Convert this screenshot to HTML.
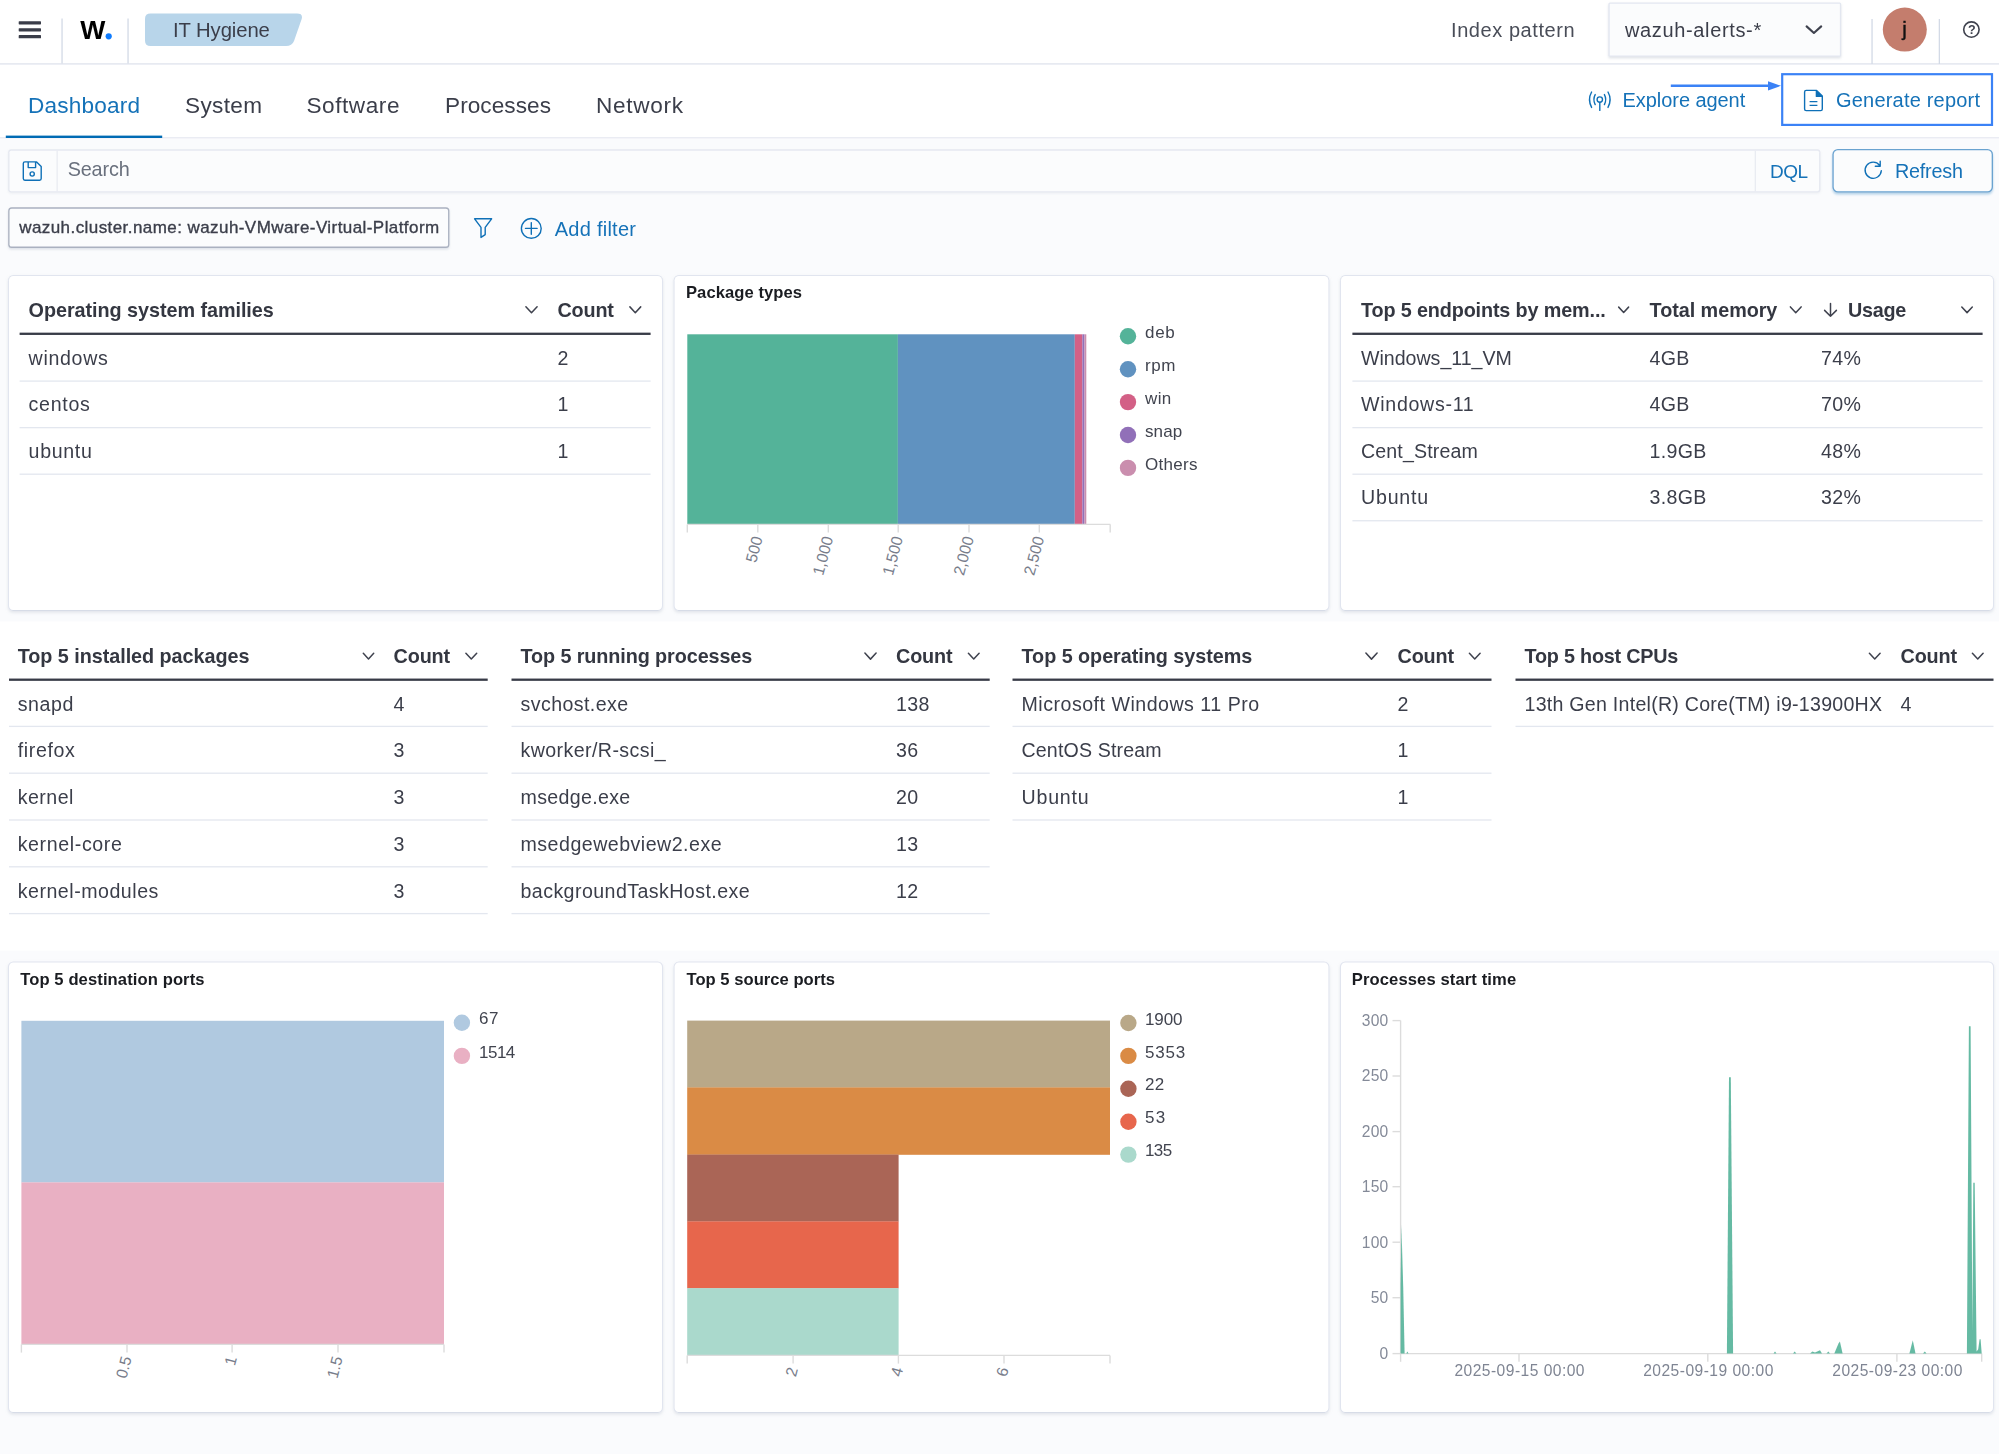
<!DOCTYPE html>
<html lang="en"><head><meta charset="utf-8"><title>IT Hygiene - Dashboard</title>
<style>
html,body{margin:0;padding:0;}
body{width:1999px;height:1454px;position:relative;overflow:hidden;background:#fafbfd;font-family:"Liberation Sans",Arial,sans-serif;color:#3b3e4a;}
div{position:absolute;}
#txt{left:0;top:0;width:1999px;height:1454px;will-change:transform;}
.t{position:absolute;white-space:nowrap;line-height:1;}
svg{position:absolute;left:0;top:0;}
svg text{font-family:"Liberation Sans",Arial,sans-serif;}
</style></head>
<body>

<svg width="1999" height="1454" viewBox="0 0 1999 1454">
<defs>
<filter id="sh0" x="-5%" y="-30%" width="110%" height="170%"><feDropShadow dx="0" dy="1" stdDeviation="1" flood-color="#98a2b3" flood-opacity="0.15"/></filter>
<filter id="sh1" x="-5%" y="-30%" width="110%" height="170%"><feDropShadow dx="0" dy="1.5" stdDeviation="1.2" flood-color="#98a2b3" flood-opacity="0.3"/></filter>
<filter id="shb" x="-5%" y="-30%" width="110%" height="170%"><feDropShadow dx="0" dy="2" stdDeviation="1.3" flood-color="#006bb4" flood-opacity="0.28"/></filter>
<filter id="shp" x="-3%" y="-5%" width="106%" height="112%"><feDropShadow dx="0" dy="1.6" stdDeviation="1.4" flood-color="#98a2b3" flood-opacity="0.26"/></filter>
</defs>
<rect x="0.00" y="0.00" width="1999.00" height="64.00" rx="0" fill="#fff"/>
<rect x="0.00" y="63.30" width="1999.00" height="1.40" rx="0" fill="#dde2ec"/>
<rect x="18.70" y="21.20" width="22.30" height="3.20" fill="#3a3d49" rx="0.6"/>
<rect x="18.70" y="28.20" width="22.30" height="3.20" fill="#3a3d49" rx="0.6"/>
<rect x="18.70" y="35.10" width="22.30" height="3.20" fill="#3a3d49" rx="0.6"/>
<rect x="61.40" y="18.50" width="1.30" height="45.00" fill="#d3dae6" />
<rect x="127.40" y="18.50" width="1.30" height="45.00" fill="#d3dae6" />
<circle cx="108.70" cy="36.30" r="3.10" fill="#0f7cff" />
<path d="M150.5 13.6 H297 Q303.5 13.6 301.5 19.5 L294 41 Q292 46 286 46 H150.5 Q145 46 145 40.5 V19 Q145 13.6 150.5 13.6 Z" stroke="none" fill="#b8d5ea" stroke-width="1.33" />
<rect x="1608.40" y="2.40" width="232.80" height="54.40" rx="1.5" fill="#e3e7f0" filter="url(#sh1)"/>
<rect x="1609.73" y="3.73" width="230.14" height="51.74" rx="0.17" fill="#fbfcfd"/>
<path d="M1806.6 26.4 L1813.9 33 L1821.2 26.4" stroke="#3f424e" fill="none" stroke-width="2.1" stroke-linecap="round" stroke-linejoin="round"/>
<rect x="1871.40" y="19.00" width="1.30" height="45.00" fill="#d3dae6" />
<rect x="1938.70" y="19.00" width="1.30" height="45.00" fill="#d3dae6" />
<circle cx="1904.80" cy="29.60" r="22.00" fill="#c47d6d" />
<circle cx="1971.4" cy="29.6" r="7.7" fill="none" stroke="#3f424e" stroke-width="1.6"/>
<rect x="0.00" y="64.70" width="1999.00" height="72.30" rx="0" fill="#fff"/>
<rect x="0.00" y="137.00" width="1999.00" height="1.40" rx="0" fill="#eaecf3"/>
<rect x="5.80" y="135.60" width="156.40" height="2.40" fill="#006bb4" />
<rect x="1781.10" y="73.10" width="212.00" height="52.90" rx="0" fill="#3b82f6"/>
<rect x="1783.30" y="75.30" width="207.60" height="48.50" rx="0.00" fill="#fff"/>
<line x1="1670.80" y1="85.80" x2="1770.00" y2="85.80" stroke="#3b82f6" stroke-width="2.4" />
<path d="M1768 81.3 L1781 85.8 L1768 90.4 Z" stroke="none" fill="#3b82f6" stroke-width="1.33" />
<rect x="8.20" y="149.30" width="1812.20" height="43.20" rx="3" fill="#e6e9f1" filter="url(#sh0)"/>
<rect x="9.53" y="150.63" width="1809.54" height="40.54" rx="1.67" fill="#fbfcfd"/>
<rect x="56.50" y="150.50" width="1.30" height="41.00" fill="#e9ecf2" />
<rect x="1754.70" y="150.50" width="1.30" height="41.00" fill="#e9ecf2" />
<rect x="1832.40" y="149.00" width="160.60" height="43.50" rx="5.5" fill="#6aa3d0" filter="url(#shb)"/>
<rect x="1833.73" y="150.33" width="157.94" height="40.84" rx="4.17" fill="#fbfcfd"/>
<rect x="8.20" y="207.30" width="441.20" height="40.60" rx="3.5" fill="#aab1c0" filter="url(#sh1)"/>
<rect x="9.53" y="208.63" width="438.54" height="37.94" rx="2.17" fill="#fbfcfd"/>
<rect x="8.00" y="275.00" width="655.00" height="336.00" rx="5.3" fill="#e1e5ef" filter="url(#shp)"/>
<rect x="9.00" y="276.00" width="653.00" height="334.00" rx="4.30" fill="#fff"/>
<rect x="12.50" y="610.00" width="646.00" height="1.00" fill="#d7dce7" />
<rect x="8.00" y="961.50" width="655.00" height="451.50" rx="5.3" fill="#e1e5ef" filter="url(#shp)"/>
<rect x="9.00" y="962.50" width="653.00" height="449.50" rx="4.30" fill="#fff"/>
<rect x="12.50" y="1412.00" width="646.00" height="1.00" fill="#d7dce7" />
<rect x="673.60" y="275.00" width="655.80" height="336.00" rx="5.3" fill="#e1e5ef" filter="url(#shp)"/>
<rect x="674.60" y="276.00" width="653.80" height="334.00" rx="4.30" fill="#fff"/>
<rect x="678.10" y="610.00" width="646.80" height="1.00" fill="#d7dce7" />
<rect x="673.60" y="961.50" width="655.80" height="451.50" rx="5.3" fill="#e1e5ef" filter="url(#shp)"/>
<rect x="674.60" y="962.50" width="653.80" height="449.50" rx="4.30" fill="#fff"/>
<rect x="678.10" y="1412.00" width="646.80" height="1.00" fill="#d7dce7" />
<rect x="1340.00" y="275.00" width="654.00" height="336.00" rx="5.3" fill="#e1e5ef" filter="url(#shp)"/>
<rect x="1341.00" y="276.00" width="652.00" height="334.00" rx="4.30" fill="#fff"/>
<rect x="1344.50" y="610.00" width="645.00" height="1.00" fill="#d7dce7" />
<rect x="1340.00" y="961.50" width="654.00" height="451.50" rx="5.3" fill="#e1e5ef" filter="url(#shp)"/>
<rect x="1341.00" y="962.50" width="652.00" height="449.50" rx="4.30" fill="#fff"/>
<rect x="1344.50" y="1412.00" width="645.00" height="1.00" fill="#d7dce7" />
<rect x="0.00" y="621.50" width="1999.00" height="329.10" rx="0" fill="#fff"/>
<rect x="19.60" y="332.65" width="631.00" height="2.30" fill="#383b47" />
<path d="M525.90 306.78 L531.50 312.82 L537.10 306.78" stroke="#3f424e" fill="none" stroke-width="1.5" stroke-linecap="round" stroke-linejoin="round"/>
<path d="M629.90 306.88 L635.30 312.72 L640.70 306.88" stroke="#3f424e" fill="none" stroke-width="1.5" stroke-linecap="round" stroke-linejoin="round"/>
<rect x="19.60" y="380.45" width="631.00" height="1.30" fill="#e3e7ef" />
<rect x="19.60" y="427.00" width="631.00" height="1.30" fill="#e3e7ef" />
<rect x="19.60" y="473.55" width="631.00" height="1.30" fill="#e3e7ef" />
<rect x="1352.40" y="332.65" width="630.20" height="2.30" fill="#383b47" />
<path d="M1618.70 307.13 L1623.65 312.47 L1628.60 307.13" stroke="#3f424e" fill="none" stroke-width="1.5" stroke-linecap="round" stroke-linejoin="round"/>
<path d="M1790.40 306.91 L1795.75 312.69 L1801.10 306.91" stroke="#3f424e" fill="none" stroke-width="1.5" stroke-linecap="round" stroke-linejoin="round"/>
<path d="M1961.80 306.97 L1967.05 312.63 L1972.30 306.97" stroke="#3f424e" fill="none" stroke-width="1.5" stroke-linecap="round" stroke-linejoin="round"/>
<rect x="1352.40" y="380.45" width="630.20" height="1.30" fill="#e3e7ef" />
<rect x="1352.40" y="427.00" width="630.20" height="1.30" fill="#e3e7ef" />
<rect x="1352.40" y="473.55" width="630.20" height="1.30" fill="#e3e7ef" />
<rect x="1352.40" y="520.10" width="630.20" height="1.30" fill="#e3e7ef" />
<path d="M1830.5 303.4 V316.2 M1824.6 310.4 L1830.5 316.3 L1836.4 310.4" stroke="#3f424e" fill="none" stroke-width="1.5" stroke-linecap="round" stroke-linejoin="round"/>
<rect x="9.00" y="678.55" width="478.70" height="2.30" fill="#383b47" />
<path d="M363.30 653.29 L368.50 658.91 L373.70 653.29" stroke="#3f424e" fill="none" stroke-width="1.5" stroke-linecap="round" stroke-linejoin="round"/>
<path d="M465.90 653.18 L471.30 659.02 L476.70 653.18" stroke="#3f424e" fill="none" stroke-width="1.5" stroke-linecap="round" stroke-linejoin="round"/>
<rect x="9.00" y="725.75" width="478.70" height="1.30" fill="#e3e7ef" />
<rect x="9.00" y="772.55" width="478.70" height="1.30" fill="#e3e7ef" />
<rect x="9.00" y="819.35" width="478.70" height="1.30" fill="#e3e7ef" />
<rect x="9.00" y="866.15" width="478.70" height="1.30" fill="#e3e7ef" />
<rect x="9.00" y="912.95" width="478.70" height="1.30" fill="#e3e7ef" />
<rect x="511.50" y="678.55" width="478.20" height="2.30" fill="#383b47" />
<path d="M864.90 653.08 L870.50 659.12 L876.10 653.08" stroke="#3f424e" fill="none" stroke-width="1.5" stroke-linecap="round" stroke-linejoin="round"/>
<path d="M968.40 653.21 L973.75 658.99 L979.10 653.21" stroke="#3f424e" fill="none" stroke-width="1.5" stroke-linecap="round" stroke-linejoin="round"/>
<rect x="511.50" y="725.75" width="478.20" height="1.30" fill="#e3e7ef" />
<rect x="511.50" y="772.55" width="478.20" height="1.30" fill="#e3e7ef" />
<rect x="511.50" y="819.35" width="478.20" height="1.30" fill="#e3e7ef" />
<rect x="511.50" y="866.15" width="478.20" height="1.30" fill="#e3e7ef" />
<rect x="511.50" y="912.95" width="478.20" height="1.30" fill="#e3e7ef" />
<rect x="1012.50" y="678.55" width="479.00" height="2.30" fill="#383b47" />
<path d="M1365.90 653.08 L1371.50 659.12 L1377.10 653.08" stroke="#3f424e" fill="none" stroke-width="1.5" stroke-linecap="round" stroke-linejoin="round"/>
<path d="M1469.40 653.21 L1474.75 658.99 L1480.10 653.21" stroke="#3f424e" fill="none" stroke-width="1.5" stroke-linecap="round" stroke-linejoin="round"/>
<rect x="1012.50" y="725.75" width="479.00" height="1.30" fill="#e3e7ef" />
<rect x="1012.50" y="772.55" width="479.00" height="1.30" fill="#e3e7ef" />
<rect x="1012.50" y="819.35" width="479.00" height="1.30" fill="#e3e7ef" />
<rect x="1515.50" y="678.55" width="478.00" height="2.30" fill="#383b47" />
<path d="M1869.40 653.21 L1874.75 658.99 L1880.10 653.21" stroke="#3f424e" fill="none" stroke-width="1.5" stroke-linecap="round" stroke-linejoin="round"/>
<path d="M1972.40 653.21 L1977.75 658.99 L1983.10 653.21" stroke="#3f424e" fill="none" stroke-width="1.5" stroke-linecap="round" stroke-linejoin="round"/>
<rect x="1515.50" y="725.75" width="478.00" height="1.30" fill="#e3e7ef" />
<rect x="687.30" y="334.30" width="210.60" height="189.80" fill="#54b399" />
<rect x="897.90" y="334.30" width="176.90" height="189.80" fill="#6092c0" />
<rect x="1074.80" y="334.30" width="7.60" height="189.80" fill="#d36086" />
<rect x="1082.40" y="334.30" width="2.10" height="189.80" fill="#9170b8" />
<rect x="1084.50" y="334.30" width="1.80" height="189.80" fill="#ca8eae" />
<line x1="687.30" y1="524.40" x2="1110.40" y2="524.40" stroke="#dcdcdc" stroke-width="1.4" />
<line x1="687.30" y1="524.40" x2="687.30" y2="532.60" stroke="#dcdcdc" stroke-width="1.4" />
<line x1="757.80" y1="524.40" x2="757.80" y2="532.60" stroke="#dcdcdc" stroke-width="1.4" />
<line x1="828.30" y1="524.40" x2="828.30" y2="532.60" stroke="#dcdcdc" stroke-width="1.4" />
<line x1="898.20" y1="524.40" x2="898.20" y2="532.60" stroke="#dcdcdc" stroke-width="1.4" />
<line x1="969.00" y1="524.40" x2="969.00" y2="532.60" stroke="#dcdcdc" stroke-width="1.4" />
<line x1="1039.30" y1="524.40" x2="1039.30" y2="532.60" stroke="#dcdcdc" stroke-width="1.4" />
<line x1="1110.20" y1="524.40" x2="1110.20" y2="532.60" stroke="#dcdcdc" stroke-width="1.4" />
<text transform="translate(762.70,538.00) rotate(-75)" text-anchor="end" font-size="15.8" fill="#787d8b">500</text>
<text transform="translate(833.20,538.00) rotate(-75)" text-anchor="end" font-size="15.8" fill="#787d8b">1,000</text>
<text transform="translate(903.10,538.00) rotate(-75)" text-anchor="end" font-size="15.8" fill="#787d8b">1,500</text>
<text transform="translate(973.90,538.00) rotate(-75)" text-anchor="end" font-size="15.8" fill="#787d8b">2,000</text>
<text transform="translate(1044.20,538.00) rotate(-75)" text-anchor="end" font-size="15.8" fill="#787d8b">2,500</text>
<circle cx="1128.00" cy="336.30" r="8.20" fill="#54b399" />
<circle cx="1128.00" cy="369.20" r="8.20" fill="#6092c0" />
<circle cx="1128.00" cy="402.10" r="8.20" fill="#d36086" />
<circle cx="1128.00" cy="435.00" r="8.20" fill="#9170b8" />
<circle cx="1128.00" cy="467.90" r="8.20" fill="#ca8eae" />
<rect x="21.40" y="1020.80" width="422.60" height="161.70" fill="#b0c9e0" />
<rect x="21.40" y="1182.40" width="422.60" height="162.00" fill="#e9b0c3" />
<line x1="21.40" y1="1344.40" x2="444.00" y2="1344.40" stroke="#dcdcdc" stroke-width="1.4" />
<line x1="21.40" y1="1344.40" x2="21.40" y2="1352.60" stroke="#dcdcdc" stroke-width="1.4" />
<line x1="127.00" y1="1344.40" x2="127.00" y2="1352.60" stroke="#dcdcdc" stroke-width="1.4" />
<line x1="232.10" y1="1344.40" x2="232.10" y2="1352.60" stroke="#dcdcdc" stroke-width="1.4" />
<line x1="338.00" y1="1344.40" x2="338.00" y2="1352.60" stroke="#dcdcdc" stroke-width="1.4" />
<line x1="444.00" y1="1344.40" x2="444.00" y2="1352.60" stroke="#dcdcdc" stroke-width="1.4" />
<text transform="translate(131.90,1358.00) rotate(-75)" text-anchor="end" font-size="15.8" fill="#787d8b">0.5</text>
<text transform="translate(237.00,1358.00) rotate(-75)" text-anchor="end" font-size="15.8" fill="#787d8b">1</text>
<text transform="translate(342.90,1358.00) rotate(-75)" text-anchor="end" font-size="15.8" fill="#787d8b">1.5</text>
<circle cx="461.90" cy="1022.70" r="8.20" fill="#b0c9e0" />
<circle cx="461.90" cy="1055.90" r="8.20" fill="#e9b0c3" />
<rect x="687.20" y="1020.60" width="422.80" height="67.00" fill="#b9a888" />
<rect x="687.20" y="1087.40" width="422.80" height="67.40" fill="#da8b45" />
<rect x="687.20" y="1154.60" width="211.40" height="67.00" fill="#aa6556" />
<rect x="687.20" y="1221.40" width="211.40" height="67.00" fill="#e7664c" />
<rect x="687.20" y="1288.20" width="211.40" height="67.30" fill="#aad9cc" />
<line x1="687.20" y1="1355.40" x2="1110.00" y2="1355.40" stroke="#dcdcdc" stroke-width="1.4" />
<line x1="687.20" y1="1355.40" x2="687.20" y2="1363.60" stroke="#dcdcdc" stroke-width="1.4" />
<line x1="793.10" y1="1355.40" x2="793.10" y2="1363.60" stroke="#dcdcdc" stroke-width="1.4" />
<line x1="898.40" y1="1355.40" x2="898.40" y2="1363.60" stroke="#dcdcdc" stroke-width="1.4" />
<line x1="1004.00" y1="1355.40" x2="1004.00" y2="1363.60" stroke="#dcdcdc" stroke-width="1.4" />
<line x1="1110.00" y1="1355.40" x2="1110.00" y2="1363.60" stroke="#dcdcdc" stroke-width="1.4" />
<text transform="translate(798.00,1369.00) rotate(-75)" text-anchor="end" font-size="15.8" fill="#787d8b">2</text>
<text transform="translate(903.30,1369.00) rotate(-75)" text-anchor="end" font-size="15.8" fill="#787d8b">4</text>
<text transform="translate(1008.90,1369.00) rotate(-75)" text-anchor="end" font-size="15.8" fill="#787d8b">6</text>
<circle cx="1128.40" cy="1023.00" r="8.20" fill="#b9a888" />
<circle cx="1128.40" cy="1055.90" r="8.20" fill="#da8b45" />
<circle cx="1128.40" cy="1088.80" r="8.20" fill="#aa6556" />
<circle cx="1128.40" cy="1121.70" r="8.20" fill="#e7664c" />
<circle cx="1128.40" cy="1154.60" r="8.20" fill="#aad9cc" />
<line x1="1400.60" y1="1020.60" x2="1400.60" y2="1353.60" stroke="#dcdcdc" stroke-width="1.4" />
<line x1="1400.60" y1="1353.60" x2="1981.70" y2="1353.60" stroke="#dcdcdc" stroke-width="1.4" />
<line x1="1392.50" y1="1020.60" x2="1400.60" y2="1020.60" stroke="#dcdcdc" stroke-width="1.4" />
<line x1="1392.50" y1="1076.00" x2="1400.60" y2="1076.00" stroke="#dcdcdc" stroke-width="1.4" />
<line x1="1392.50" y1="1131.60" x2="1400.60" y2="1131.60" stroke="#dcdcdc" stroke-width="1.4" />
<line x1="1392.50" y1="1186.70" x2="1400.60" y2="1186.70" stroke="#dcdcdc" stroke-width="1.4" />
<line x1="1392.50" y1="1242.20" x2="1400.60" y2="1242.20" stroke="#dcdcdc" stroke-width="1.4" />
<line x1="1392.50" y1="1297.70" x2="1400.60" y2="1297.70" stroke="#dcdcdc" stroke-width="1.4" />
<line x1="1392.50" y1="1353.60" x2="1400.60" y2="1353.60" stroke="#dcdcdc" stroke-width="1.4" />
<line x1="1400.60" y1="1353.60" x2="1400.60" y2="1361.80" stroke="#dcdcdc" stroke-width="1.4" />
<line x1="1519.00" y1="1353.60" x2="1519.00" y2="1361.80" stroke="#dcdcdc" stroke-width="1.4" />
<line x1="1707.80" y1="1353.60" x2="1707.80" y2="1361.80" stroke="#dcdcdc" stroke-width="1.4" />
<line x1="1896.90" y1="1353.60" x2="1896.90" y2="1361.80" stroke="#dcdcdc" stroke-width="1.4" />
<line x1="1981.70" y1="1353.60" x2="1981.70" y2="1361.80" stroke="#dcdcdc" stroke-width="1.4" />
<path d="M1400.6 1353.6 L1400.6 1287.0 L1401.4 1224.8 L1403.2 1287.0 L1404.6 1353.6 Z" stroke="none" fill="#54b399" stroke-width="1.33" fill-opacity="0.9"/>
<path d="M1406.3 1353.6 L1407.3 1351.4 L1408.5 1353.6 Z" stroke="none" fill="#54b399" stroke-width="1.33" fill-opacity="0.9"/>
<path d="M1726.9 1353.6 L1729.0 1077.2 L1730.8 1077.2 L1733.1 1353.6 Z" stroke="none" fill="#54b399" stroke-width="1.33" fill-opacity="0.9"/>
<path d="M1773.5 1353.6 L1775.0 1351.4 L1776.5 1353.6 Z" stroke="none" fill="#54b399" stroke-width="1.33" fill-opacity="0.9"/>
<path d="M1793.0 1353.6 L1794.7 1351.4 L1796.3 1353.6 Z" stroke="none" fill="#54b399" stroke-width="1.33" fill-opacity="0.9"/>
<path d="M1810.0 1353.6 L1812.4 1351.4 L1815.0 1352.5 L1820.0 1350.3 L1822.0 1353.6 Z" stroke="none" fill="#54b399" stroke-width="1.33" fill-opacity="0.9"/>
<path d="M1826.5 1353.6 L1828.3 1351.4 L1830.0 1353.6 Z" stroke="none" fill="#54b399" stroke-width="1.33" fill-opacity="0.9"/>
<path d="M1834.3 1353.6 L1838.5 1343.6 L1839.9 1341.4 L1842.6 1353.6 Z" stroke="none" fill="#54b399" stroke-width="1.33" fill-opacity="0.9"/>
<path d="M1909.4 1353.6 L1912.8 1340.3 L1915.5 1353.6 Z" stroke="none" fill="#54b399" stroke-width="1.33" fill-opacity="0.9"/>
<path d="M1923.0 1353.6 L1924.8 1351.4 L1926.5 1353.6 Z" stroke="none" fill="#54b399" stroke-width="1.33" fill-opacity="0.9"/>
<path d="M1966.9 1353.6 L1968.9 1026.2 L1970.6 1026.2 L1972.4 1331.4 L1973.3 1182.7 L1974.7 1182.7 L1976.6 1351.4 L1978.2 1349.2 L1979.6 1339.2 L1980.6 1339.2 L1981.7 1353.6 Z" stroke="none" fill="#54b399" stroke-width="1.33" fill-opacity="0.9"/>
<path d="M23.3 163.5 Q23.3 161.9 24.9 161.9 H36.6 L41.2 166.5 V178.6 Q41.2 180.2 39.6 180.2 H24.9 Q23.3 180.2 23.3 178.6 Z M28.2 162 V167.6 H35.6 V162" stroke="#0f70b7" fill="none" stroke-width="1.4" stroke-linejoin="round"/>
<circle cx="32.2" cy="174" r="2.1" fill="none" stroke="#0f70b7" stroke-width="1.4"/>
<path d="M474.6 218.8 H491.6 L485.2 227.4 V234.6 L481 237.4 V227.4 Z" stroke="#0f70b7" fill="none" stroke-width="1.4" stroke-linejoin="round"/>
<circle cx="531.3" cy="228.4" r="9.9" fill="none" stroke="#0f70b7" stroke-width="1.4"/>
<path d="M531.3 222.6 V234.2 M525.5 228.4 H537.1" stroke="#0f70b7" fill="none" stroke-width="1.4" stroke-linecap="round"/>
<path d="M1879.6 165.2 A8.1 8.1 0 1 0 1881.3 170.8 M1880.2 161.3 V166.3 H1875.3" stroke="#0f70b7" fill="none" stroke-width="1.4" stroke-linecap="round" stroke-linejoin="round"/>
<circle cx="1599.8" cy="99.6" r="2.7" fill="none" stroke="#0f70b7" stroke-width="1.4"/>
<path d="M1599.8 102.4 V110.4 M1595.2 94.6 Q1592.6 99.4 1595.2 104.6 M1604.4 94.6 Q1607 99.4 1604.4 104.6 M1591.6 92 Q1587.4 99.4 1591.6 107.4 M1608 92 Q1612.2 99.4 1608 107.4" stroke="#0f70b7" fill="none" stroke-width="1.4" stroke-linecap="round"/>
<path d="M1804.6 92 Q1804.6 90.4 1806.2 90.4 H1816.6 L1822.3 96.1 V109 Q1822.3 110.6 1820.7 110.6 H1806.2 Q1804.6 110.6 1804.6 109 Z M1816.4 90.6 V96.4 H1822.2 M1809.6 101.6 H1817.4 M1809.6 105.4 H1817.4" stroke="#0f70b7" fill="none" stroke-width="1.4" stroke-linejoin="round"/>
<path d="M1816.6 90.4 L1822.3 96.1 H1816.6 Z" stroke="none" fill="#0f70b7" stroke-width="1.33" />
</svg>
<div id="txt">
<span class="t" style="left:80.30px;top:17.00px;font-size:26.60px;font-weight:700;color:#000;">W</span>
<span class="t" style="left:173.00px;top:20.00px;font-size:20.30px;letter-spacing:-0.089px;">IT Hygiene</span>
<span class="t" style="left:1451.00px;top:20.00px;font-size:20.00px;letter-spacing:0.571px;color:#494d58;">Index pattern</span>
<span class="t" style="left:1625.00px;top:20.00px;font-size:20.00px;letter-spacing:0.644px;">wazuh-alerts-*</span>
<span class="t" style="left:1902.30px;top:19.00px;font-size:20.50px;color:#111;-webkit-text-stroke:0.4px currentColor;">j</span>
<span class="t" style="left:1967.90px;top:24.00px;font-size:12.50px;font-weight:700;color:#3f424e;">?</span>
<span class="t" style="left:28.00px;top:95.00px;font-size:22.60px;letter-spacing:0.179px;color:#1572b8;">Dashboard</span>
<span class="t" style="left:185.00px;top:95.00px;font-size:22.60px;letter-spacing:0.330px;">System</span>
<span class="t" style="left:306.40px;top:95.00px;font-size:22.60px;letter-spacing:0.559px;">Software</span>
<span class="t" style="left:445.00px;top:95.00px;font-size:22.60px;letter-spacing:0.061px;">Processes</span>
<span class="t" style="left:596.00px;top:95.00px;font-size:22.60px;letter-spacing:0.685px;">Network</span>
<span class="t" style="left:1622.60px;top:90.00px;font-size:20.00px;letter-spacing:-0.068px;color:#1572b8;">Explore agent</span>
<span class="t" style="left:1836.00px;top:90.00px;font-size:20.00px;letter-spacing:0.200px;color:#1572b8;">Generate report</span>
<span class="t" style="left:67.70px;top:160.00px;font-size:19.80px;letter-spacing:-0.147px;color:#69707d;">Search</span>
<span class="t" style="left:1770.00px;top:162.00px;font-size:19.00px;letter-spacing:-0.534px;color:#1572b8;">DQL</span>
<span class="t" style="left:1895.00px;top:162.00px;font-size:19.80px;letter-spacing:-0.222px;color:#1572b8;">Refresh</span>
<span class="t" style="left:19.20px;top:219.00px;font-size:17.00px;letter-spacing:0.430px;-webkit-text-stroke:0.35px currentColor;">wazuh.cluster.name: wazuh-VMware-Virtual-Platform</span>
<span class="t" style="left:554.70px;top:219.00px;font-size:20.00px;letter-spacing:0.263px;color:#1572b8;">Add filter</span>
<span class="t" style="left:28.60px;top:301.00px;font-size:19.80px;letter-spacing:-0.046px;font-weight:700;color:#343741;">Operating system families</span>
<span class="t" style="left:557.40px;top:301.00px;font-size:19.80px;letter-spacing:-0.144px;font-weight:700;color:#343741;">Count</span>
<span class="t" style="left:28.60px;top:349.00px;font-size:19.60px;letter-spacing:0.672px;">windows</span>
<span class="t" style="left:557.40px;top:349.00px;font-size:19.60px;">2</span>
<span class="t" style="left:28.60px;top:395.00px;font-size:19.60px;letter-spacing:0.690px;">centos</span>
<span class="t" style="left:557.40px;top:395.00px;font-size:19.60px;">1</span>
<span class="t" style="left:28.60px;top:442.00px;font-size:19.60px;letter-spacing:0.670px;">ubuntu</span>
<span class="t" style="left:557.40px;top:442.00px;font-size:19.60px;">1</span>
<span class="t" style="left:1361.00px;top:301.00px;font-size:19.80px;letter-spacing:-0.136px;font-weight:700;color:#343741;">Top 5 endpoints by mem...</span>
<span class="t" style="left:1649.60px;top:301.00px;font-size:19.80px;letter-spacing:-0.042px;font-weight:700;color:#343741;">Total memory</span>
<span class="t" style="left:1848.00px;top:301.00px;font-size:19.80px;letter-spacing:-0.283px;font-weight:700;color:#343741;">Usage</span>
<span class="t" style="left:1361.00px;top:349.00px;font-size:19.60px;letter-spacing:-0.013px;">Windows_11_VM</span>
<span class="t" style="left:1649.60px;top:349.00px;font-size:19.60px;letter-spacing:0.300px;">4GB</span>
<span class="t" style="left:1821.00px;top:349.00px;font-size:19.60px;letter-spacing:0.300px;">74%</span>
<span class="t" style="left:1361.00px;top:395.00px;font-size:19.60px;letter-spacing:0.713px;">Windows-11</span>
<span class="t" style="left:1649.60px;top:395.00px;font-size:19.60px;letter-spacing:0.300px;">4GB</span>
<span class="t" style="left:1821.00px;top:395.00px;font-size:19.60px;letter-spacing:0.300px;">70%</span>
<span class="t" style="left:1361.00px;top:442.00px;font-size:19.60px;letter-spacing:0.132px;">Cent_Stream</span>
<span class="t" style="left:1649.60px;top:442.00px;font-size:19.60px;letter-spacing:0.300px;">1.9GB</span>
<span class="t" style="left:1821.00px;top:442.00px;font-size:19.60px;letter-spacing:0.300px;">48%</span>
<span class="t" style="left:1361.00px;top:488.00px;font-size:19.60px;letter-spacing:0.799px;">Ubuntu</span>
<span class="t" style="left:1649.60px;top:488.00px;font-size:19.60px;letter-spacing:0.300px;">3.8GB</span>
<span class="t" style="left:1821.00px;top:488.00px;font-size:19.60px;letter-spacing:0.300px;">32%</span>
<span class="t" style="left:17.70px;top:647.00px;font-size:19.80px;letter-spacing:-0.040px;font-weight:700;color:#343741;">Top 5 installed packages</span>
<span class="t" style="left:393.60px;top:647.00px;font-size:19.80px;letter-spacing:-0.144px;font-weight:700;color:#343741;">Count</span>
<span class="t" style="left:17.70px;top:695.00px;font-size:19.60px;letter-spacing:0.574px;">snapd</span>
<span class="t" style="left:393.60px;top:695.00px;font-size:19.60px;">4</span>
<span class="t" style="left:17.70px;top:741.00px;font-size:19.60px;letter-spacing:0.637px;">firefox</span>
<span class="t" style="left:393.60px;top:741.00px;font-size:19.60px;">3</span>
<span class="t" style="left:17.70px;top:788.00px;font-size:19.60px;letter-spacing:0.463px;">kernel</span>
<span class="t" style="left:393.60px;top:788.00px;font-size:19.60px;">3</span>
<span class="t" style="left:17.70px;top:835.00px;font-size:19.60px;letter-spacing:0.616px;">kernel-core</span>
<span class="t" style="left:393.60px;top:835.00px;font-size:19.60px;">3</span>
<span class="t" style="left:17.70px;top:882.00px;font-size:19.60px;letter-spacing:0.516px;">kernel-modules</span>
<span class="t" style="left:393.60px;top:882.00px;font-size:19.60px;">3</span>
<span class="t" style="left:520.50px;top:647.00px;font-size:19.80px;letter-spacing:-0.090px;font-weight:700;color:#343741;">Top 5 running processes</span>
<span class="t" style="left:896.00px;top:647.00px;font-size:19.80px;letter-spacing:-0.144px;font-weight:700;color:#343741;">Count</span>
<span class="t" style="left:520.50px;top:695.00px;font-size:19.60px;letter-spacing:0.420px;">svchost.exe</span>
<span class="t" style="left:896.00px;top:695.00px;font-size:19.60px;letter-spacing:0.300px;">138</span>
<span class="t" style="left:520.50px;top:741.00px;font-size:19.60px;letter-spacing:0.415px;">kworker/R-scsi_</span>
<span class="t" style="left:896.00px;top:741.00px;font-size:19.60px;letter-spacing:0.300px;">36</span>
<span class="t" style="left:520.50px;top:788.00px;font-size:19.60px;letter-spacing:0.325px;">msedge.exe</span>
<span class="t" style="left:896.00px;top:788.00px;font-size:19.60px;letter-spacing:0.300px;">20</span>
<span class="t" style="left:520.50px;top:835.00px;font-size:19.60px;letter-spacing:0.491px;">msedgewebview2.exe</span>
<span class="t" style="left:896.00px;top:835.00px;font-size:19.60px;letter-spacing:0.300px;">13</span>
<span class="t" style="left:520.50px;top:882.00px;font-size:19.60px;letter-spacing:0.434px;">backgroundTaskHost.exe</span>
<span class="t" style="left:896.00px;top:882.00px;font-size:19.60px;letter-spacing:0.300px;">12</span>
<span class="t" style="left:1021.50px;top:647.00px;font-size:19.80px;letter-spacing:-0.036px;font-weight:700;color:#343741;">Top 5 operating systems</span>
<span class="t" style="left:1397.50px;top:647.00px;font-size:19.80px;letter-spacing:-0.144px;font-weight:700;color:#343741;">Count</span>
<span class="t" style="left:1021.50px;top:695.00px;font-size:19.60px;letter-spacing:0.500px;">Microsoft Windows 11 Pro</span>
<span class="t" style="left:1397.50px;top:695.00px;font-size:19.60px;">2</span>
<span class="t" style="left:1021.50px;top:741.00px;font-size:19.60px;letter-spacing:0.155px;">CentOS Stream</span>
<span class="t" style="left:1397.50px;top:741.00px;font-size:19.60px;">1</span>
<span class="t" style="left:1021.50px;top:788.00px;font-size:19.60px;letter-spacing:0.799px;">Ubuntu</span>
<span class="t" style="left:1397.50px;top:788.00px;font-size:19.60px;">1</span>
<span class="t" style="left:1524.50px;top:647.00px;font-size:19.80px;letter-spacing:-0.210px;font-weight:700;color:#343741;">Top 5 host CPUs</span>
<span class="t" style="left:1900.50px;top:647.00px;font-size:19.80px;letter-spacing:-0.144px;font-weight:700;color:#343741;">Count</span>
<span class="t" style="left:1524.50px;top:695.00px;font-size:19.60px;letter-spacing:0.253px;">13th Gen Intel(R) Core(TM) i9-13900HX</span>
<span class="t" style="left:1900.50px;top:695.00px;font-size:19.60px;">4</span>
<span class="t" style="left:686.00px;top:285.00px;font-size:16.60px;letter-spacing:0.054px;font-weight:700;color:#1a1c21;">Package types</span>
<span class="t" style="left:1145.00px;top:324.00px;font-size:17.00px;letter-spacing:0.718px;color:#41444f;">deb</span>
<span class="t" style="left:1145.00px;top:357.00px;font-size:17.00px;letter-spacing:0.561px;color:#41444f;">rpm</span>
<span class="t" style="left:1145.00px;top:390.00px;font-size:17.00px;letter-spacing:0.395px;color:#41444f;">win</span>
<span class="t" style="left:1145.00px;top:423.00px;font-size:17.00px;letter-spacing:0.112px;color:#41444f;">snap</span>
<span class="t" style="left:1145.00px;top:456.00px;font-size:17.00px;letter-spacing:0.316px;color:#41444f;">Others</span>
<span class="t" style="left:20.20px;top:972.00px;font-size:16.60px;letter-spacing:0.096px;font-weight:700;color:#1a1c21;">Top 5 destination ports</span>
<span class="t" style="left:479.00px;top:1010.00px;font-size:17.00px;letter-spacing:0.590px;color:#41444f;">67</span>
<span class="t" style="left:479.00px;top:1044.00px;font-size:17.00px;letter-spacing:-0.500px;color:#41444f;">1514</span>
<span class="t" style="left:686.50px;top:972.00px;font-size:16.60px;letter-spacing:0.018px;font-weight:700;color:#1a1c21;">Top 5 source ports</span>
<span class="t" style="left:1144.90px;top:1011.00px;font-size:17.00px;letter-spacing:-0.073px;color:#41444f;">1900</span>
<span class="t" style="left:1144.90px;top:1044.00px;font-size:17.00px;letter-spacing:0.860px;color:#41444f;">5353</span>
<span class="t" style="left:1144.90px;top:1076.00px;font-size:17.00px;letter-spacing:0.290px;color:#41444f;">22</span>
<span class="t" style="left:1144.90px;top:1109.00px;font-size:17.00px;letter-spacing:1.290px;color:#41444f;">53</span>
<span class="t" style="left:1144.90px;top:1142.00px;font-size:17.00px;letter-spacing:-0.500px;color:#41444f;">135</span>
<span class="t" style="left:1351.80px;top:972.00px;font-size:16.60px;letter-spacing:0.105px;font-weight:700;color:#1a1c21;">Processes start time</span>
<span class="t" style="left:1361.67px;top:1013.00px;font-size:15.60px;letter-spacing:0.300px;color:#848a98;">300</span>
<span class="t" style="left:1361.67px;top:1068.00px;font-size:15.60px;letter-spacing:0.300px;color:#848a98;">250</span>
<span class="t" style="left:1361.67px;top:1124.00px;font-size:15.60px;letter-spacing:0.300px;color:#848a98;">200</span>
<span class="t" style="left:1361.67px;top:1179.00px;font-size:15.60px;letter-spacing:0.300px;color:#848a98;">150</span>
<span class="t" style="left:1361.67px;top:1235.00px;font-size:15.60px;letter-spacing:0.300px;color:#848a98;">100</span>
<span class="t" style="left:1370.65px;top:1290.00px;font-size:15.60px;letter-spacing:0.300px;color:#848a98;">50</span>
<span class="t" style="left:1379.62px;top:1346.00px;font-size:15.60px;color:#848a98;">0</span>
<span class="t" style="left:1454.40px;top:1363.00px;font-size:15.60px;letter-spacing:0.468px;color:#7f8593;">2025-09-15 00:00</span>
<span class="t" style="left:1643.20px;top:1363.00px;font-size:15.60px;letter-spacing:0.468px;color:#7f8593;">2025-09-19 00:00</span>
<span class="t" style="left:1832.30px;top:1363.00px;font-size:15.60px;letter-spacing:0.468px;color:#7f8593;">2025-09-23 00:00</span>
</div>
</body></html>
